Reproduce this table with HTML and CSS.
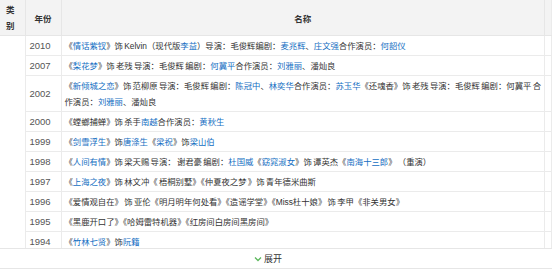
FILE: index.html
```html
<!DOCTYPE html>
<html lang="zh-CN">
<head>
<meta charset="utf-8">
<title>作品</title>
<link rel="stylesheet" href="styles.css">
</head>
<body>
<div class="box">
  <div class="viewport">
    <table class="works">
      <colgroup>
        <col class="c-type"><col class="c-year"><col class="c-name"><col class="c-end">
      </colgroup>
      <thead>
        <tr>
          <th class="th-type">类别</th>
          <th class="th-year">年份</th>
          <th class="th-name">名称</th>
          <th class="th-end"></th>
        </tr>
      </thead>
      <tbody>
        <tr>
          <td class="type" rowspan="10"></td>
          <td class="year">2010</td>
          <td class="name">《<a>情话紫钗</a>》饰 Kelvin（现代版<a>李益</a>）导演：毛俊辉编剧：<a>麦兆辉</a>、<a>庄文强</a>合作演员：<a>何韶仪</a></td>
          <td class="end"></td>
        </tr>
        <tr>
          <td class="year">2007</td>
          <td class="name">《<a>梨花梦</a>》饰 老残 导演：毛俊辉 编剧：<a>何冀平</a>合作演员：<a>刘雅丽</a>、潘灿良</td>
          <td class="end"></td>
        </tr>
        <tr>
          <td class="year">2002</td>
          <td class="name">《<a>新倾城之恋</a>》饰 范柳原 导演：毛俊辉 编剧：<a>陈冠中</a>、<a>林奕华</a>合作演员：<a>苏玉华</a>《还魂香》饰 老残 导演：毛俊辉 编剧：何冀平 合作演员：<a>刘雅丽</a>、潘灿良</td>
          <td class="end"></td>
        </tr>
        <tr>
          <td class="year">2000</td>
          <td class="name">《螳螂捕蝉》饰 杀手<a>南越</a>合作演员：<a>黄秋生</a></td>
          <td class="end"></td>
        </tr>
        <tr>
          <td class="year">1999</td>
          <td class="name">《<a>剑雪浮生</a>》饰<a>唐涤生</a>《<a>梁祝</a>》饰<a>梁山伯</a></td>
          <td class="end"></td>
        </tr>
        <tr>
          <td class="year">1998</td>
          <td class="name">《<a>人间有情</a>》饰 梁天赐 导演： 谢君豪 编剧：<a>杜国威</a>《<a>窈窕淑女</a>》饰 谭英杰《<a>南海十三郎</a>》 （重演）</td>
          <td class="end"></td>
        </tr>
        <tr>
          <td class="year">1997</td>
          <td class="name">《<a>上海之夜</a>》饰 林文冲《 梧桐别墅》《仲夏夜之梦 》饰 青年德米曲斯</td>
          <td class="end"></td>
        </tr>
        <tr>
          <td class="year">1996</td>
          <td class="name">《爱情观自在》 饰 亚伦《明月明年何处看》《造谣学堂》《Miss杜十娘》 饰 李甲《非关男女》</td>
          <td class="end"></td>
        </tr>
        <tr>
          <td class="year">1995</td>
          <td class="name">《黑鹿开口了》《哈姆雷特机器》《红房间白房间黑房间》</td>
          <td class="end"></td>
        </tr>
        <tr>
          <td class="year">1994</td>
          <td class="name">《<a>竹林七贤</a>》饰<a>阮籍</a></td>
          <td class="end"></td>
        </tr>
      </tbody>
    </table>
  </div>
  <div class="expand">
    <svg class="chev" width="8" height="6" viewBox="0 0 8 6"><path d="M1 1.5 L4 4.5 L7 1.5" fill="none" stroke="#5cb85c" stroke-width="1.3"/></svg>
    <span>展开</span>
  </div>
</div>
</body>
</html>
```

FILE: styles.css
```css
html, body {
  margin: 0;
  padding: 0;
  background: #fff;
}
body {
  font-family: "Liberation Sans", "Noto Sans CJK SC", sans-serif;
  color: #333;
}
.box {
  width: 552px;
}
.viewport {
  height: 248px;
  overflow: hidden;
}
.works {
  border-collapse: collapse;
  table-layout: fixed;
  width: 552px;
}
.c-type { width: 25px; }
.c-year { width: 36px; }
.c-end { width: 7px; }
.works th {
  background: #f3f3f3;
  font-weight: bold;
  font-size: 8.5px;
  color: #333;
  height: 35px;
  padding: 0;
  border-bottom: 1px solid #e6e6e6;
  border-right: 1px solid #e6e6e6;
  text-align: center;
  vertical-align: middle;
}
.works th.th-type {
  text-align: left;
  padding: 0 9px 0 6px;
  line-height: 16px;
}
.works td {
  padding: 2px 0 1px;
  line-height: 16px;
  border-bottom: 1px solid #ebebeb;
  border-right: 1px solid #ebebeb;
  vertical-align: middle;
}
.works td.type {
  border-bottom: none;
}
.works td.year {
  font-size: 9.5px;
  color: #555;
  padding-left: 4px;
}
.works td.name {
  font-size: 8.35px;
  word-spacing: -1px;
  padding-left: 3px;
  padding-right: 0;
}
.works td.end,
.works th.th-end {
  border-right: 1px solid #ebebeb;
}
.name a {
  color: #136ec2;
  text-decoration: none;
}
.expand {
  height: 19px;
  border-top: 1px solid #e6e6e6;
  border-bottom: 1px solid #e6e6e6;
  display: flex;
  align-items: center;
  justify-content: center;
  gap: 2px;
  padding-right: 16px;
  font-size: 9px;
  color: #333;
}
.chev {
  display: block;
}
```
